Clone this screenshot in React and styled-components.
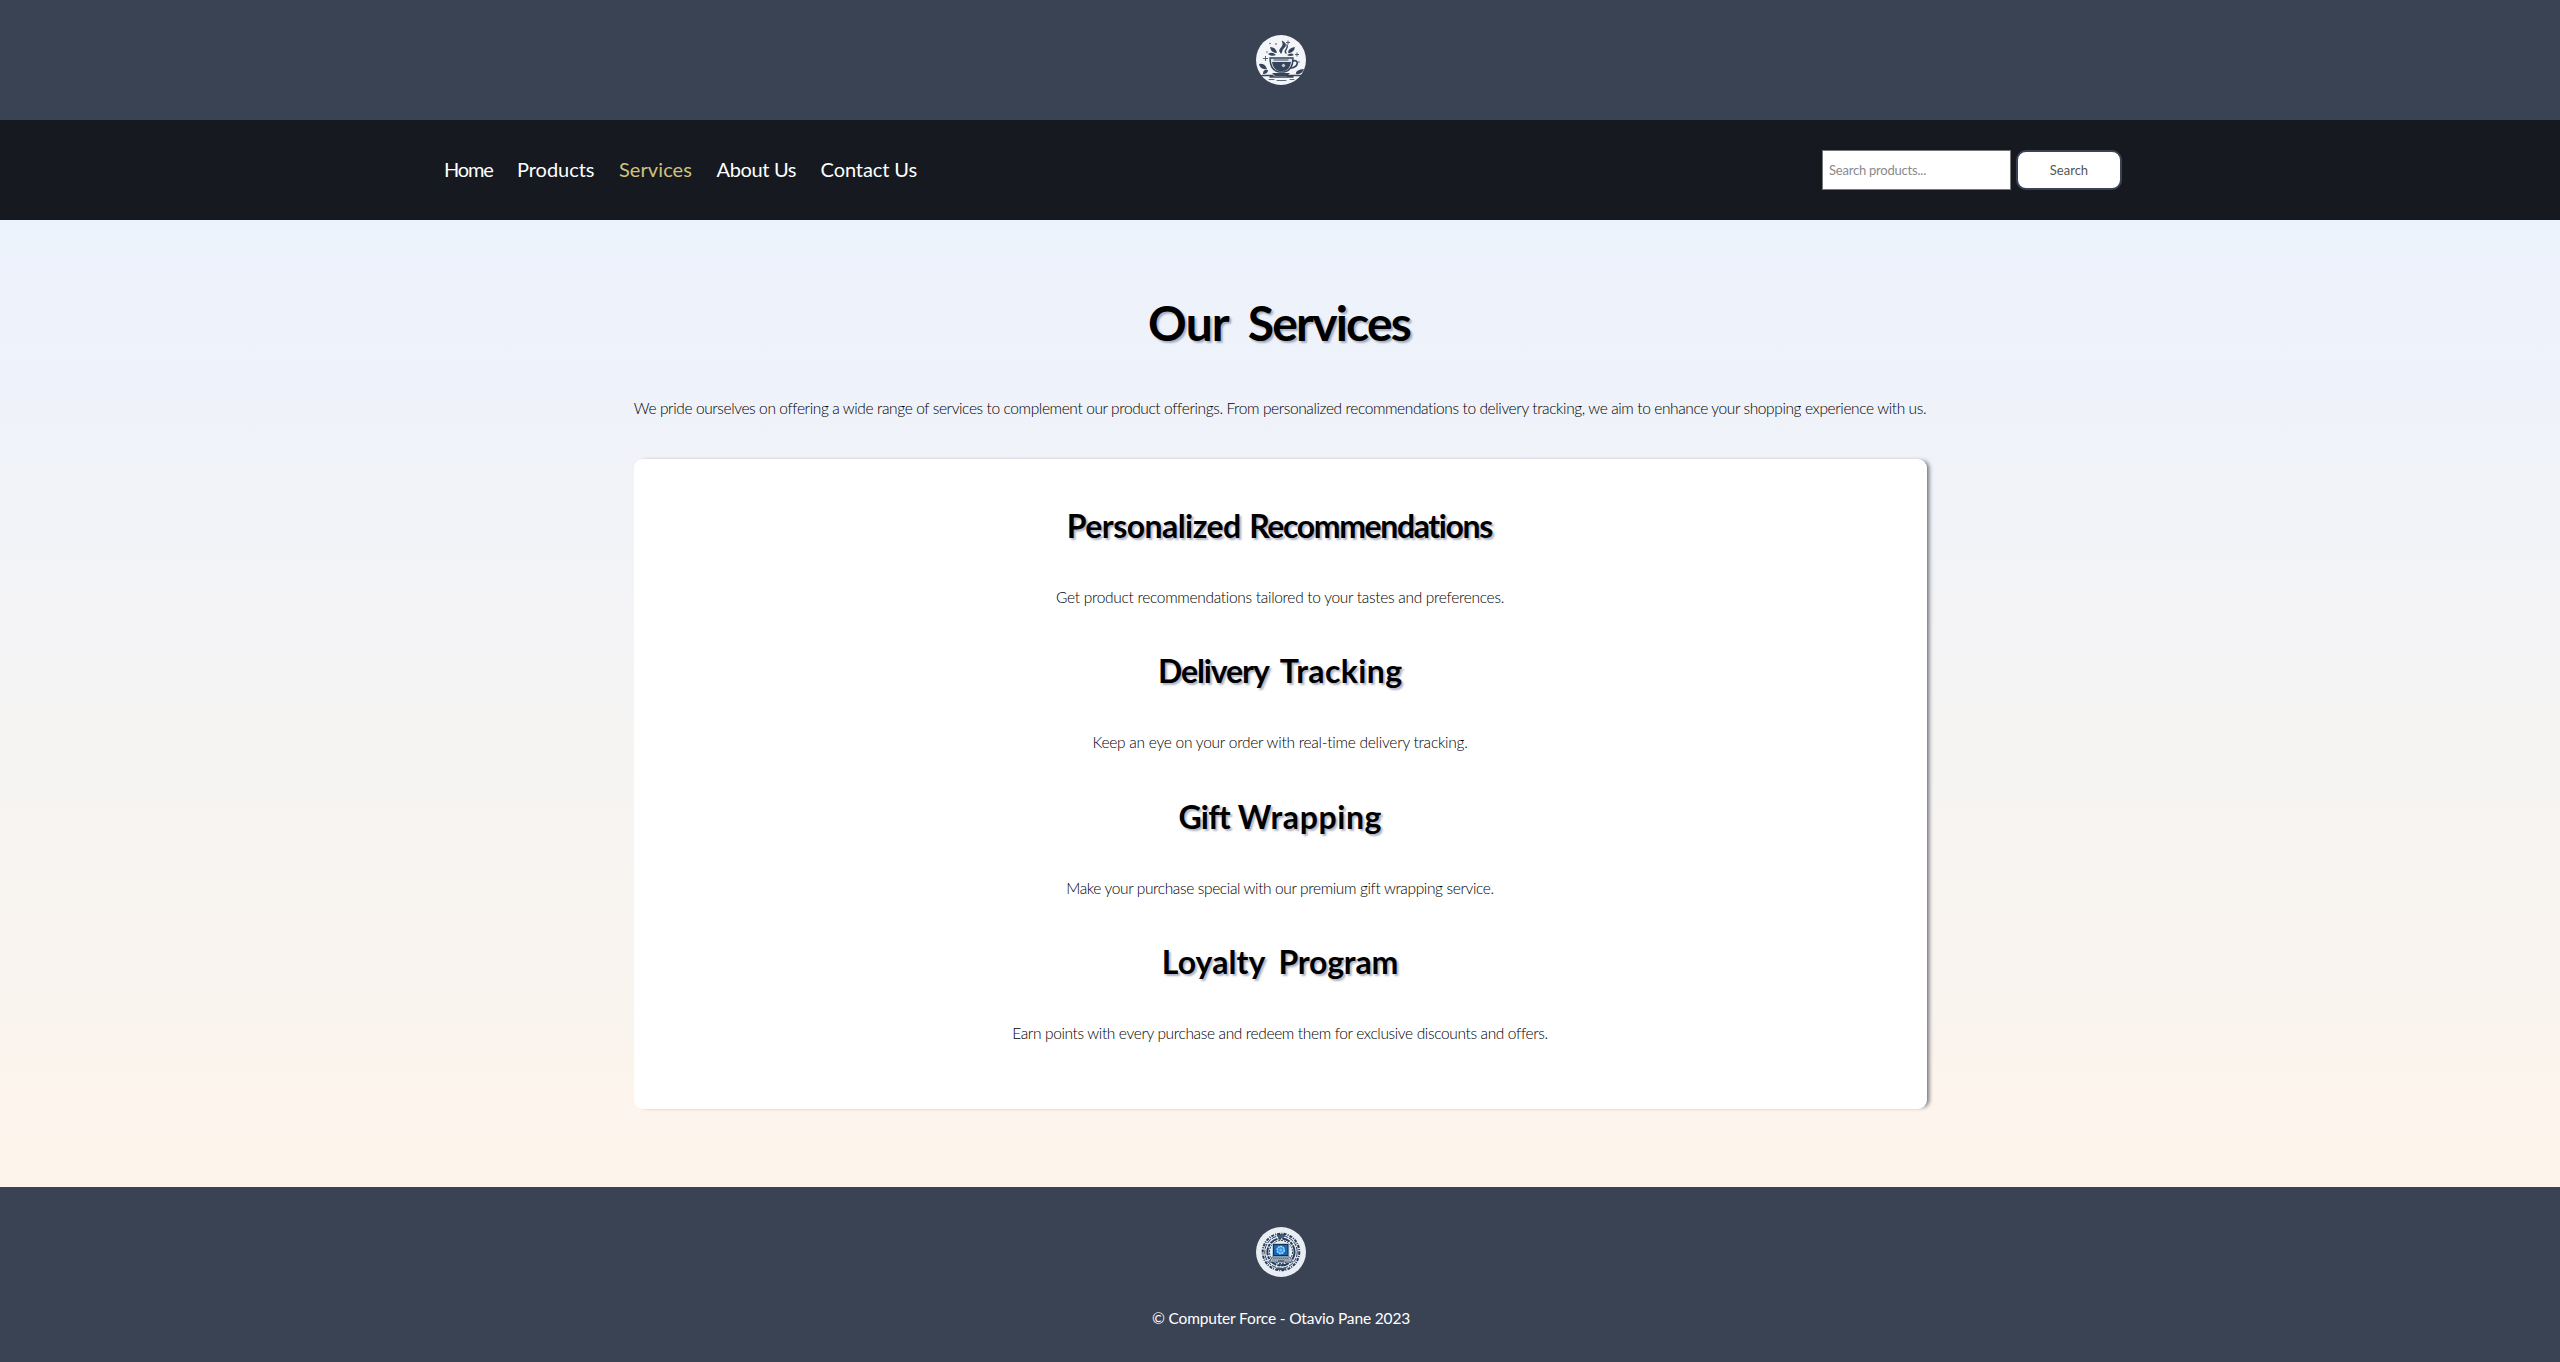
import React from "react";
import styled, { createGlobalStyle } from "styled-components";

const GlobalStyle = createGlobalStyle`
  *, *::before, *::after { box-sizing: border-box; }
  body {
    margin: 0;
    background: #394354;
    font-family: Lato, "Open Sans", sans-serif;
    color: #000000;
  }
`;

const Page = styled.div`
  display: flex;
  flex-direction: column;
  min-height: 1362px;
`;

const Header = styled.header`
  display: flex;
  justify-content: center;
  align-items: center;
  height: 120px;
  padding-left: 2px;
  background: #394354;
`;

const NavBar = styled.nav`
  display: flex;
  justify-content: space-between;
  align-items: center;
  height: 100px;
  padding: 0 438px 0 444px;
  background: #161a20;
`;

const Menu = styled.ul`
  display: flex;
  gap: 24.5px;
  margin: 0;
  padding: 0 0 2px;
  list-style: none;
`;

const MenuLink = styled.a`
  display: block;
  color: ${(p) => (p.$active ? "#d1c27c" : "#ffffff")};
  font-size: 20px;
  line-height: 24px;
  letter-spacing: ${(p) => p.$track}px;
  white-space: nowrap;
  text-decoration: none;
`;

const SearchForm = styled.form`
  display: flex;
  align-items: center;
  gap: 5px;
`;

const SearchInput = styled.input`
  width: 189px;
  height: 40px;
  padding: 0 6px 1px;
  border: 1px solid #767676;
  border-radius: 0;
  background: #ffffff;
  font: 400 13px Lato, sans-serif;
  letter-spacing: -0.22px;
  &::placeholder { color: #8a8a8a; opacity: 1; }
`;

const SearchButton = styled.button`
  width: 106px;
  height: 40px;
  padding: 0 0 1px;
  border: 2px solid #394354;
  border-radius: 10px;
  background: #ffffff;
  color: #555555;
  font: 400 13px Lato, sans-serif;
`;

const Main = styled.main`
  display: flex;
  flex-direction: column;
  align-items: center;
  height: 967px;
  padding-top: 70px;
  background: linear-gradient(180deg, #ecf3fc 0%, #eff2fa 18%, #f5f4f4 50%, #fbf4ee 85%, #fef4ec 100%);
`;

const Title = styled.h1`
  display: flex;
  gap: 18px;
  margin: 0;
  color: #000000;
  font-size: 48px;
  line-height: 66px;
  text-shadow: 2px 2px 2px rgba(57, 67, 104, 0.4);
`;

const Word = styled.span`
  letter-spacing: ${(p) => p.$track}px;
  margin-right: ${(p) => -p.$track}px;
`;

const Copy = styled.p`
  margin: 0;
  font-size: 15.5px;
  font-weight: 300;
  line-height: 24px;
  letter-spacing: ${(p) => p.$track}px;
  white-space: nowrap;
`;

const Intro = styled(Copy)`
  margin-top: 40px;
`;

const Card = styled.section`
  display: flex;
  flex-direction: column;
  gap: 30.3px;
  width: 1293px;
  height: 650px;
  margin-top: 39px;
  padding-top: 43px;
  border-radius: 9px;
  background: #ffffff;
  box-shadow: 4px 0 4px -2px rgba(30, 36, 52, 0.65);
`;

const Service = styled.article`
  display: flex;
  flex-direction: column;
  align-items: center;
  gap: 35px;
  height: 115px;
`;

const ServiceTitle = styled.h2`
  display: flex;
  gap: ${(p) => p.$gap}px;
  margin: 0;
  color: #000000;
  font-size: 32px;
  line-height: 48px;
  text-shadow: 2px 2px 2px rgba(57, 67, 104, 0.4);
`;

const Footer = styled.footer`
  display: flex;
  flex-direction: column;
  align-items: center;
  height: 175px;
  padding: 40px 0 0 2px;
  background: #394354;
  color: #ffffff;
`;

const Copyright = styled.p`
  margin: 29px 0 0;
  font-size: 15.5px;
  line-height: 24px;
  letter-spacing: -0.16px;
`;

const Logo = styled.svg`
  display: block;
  width: 50px;
  height: 50px;
`;

const links = [
  { label: "Home", track: -1.2 },
  { label: "Products", track: -0.05 },
  { label: "Services", track: 0.1, active: true },
  { label: "About Us", track: -0.35 },
  { label: "Contact Us", track: -0.1 },
];

const services = [
  {
    words: [["Personalized", -0.55], ["Recommendations", -1.4]],
    gap: 8,
    text: "Get product recommendations tailored to your tastes and preferences.",
    track: -0.3,
  },
  {
    words: [["Delivery", -1.1], ["Tracking", 0.4]],
    gap: 10,
    text: "Keep an eye on your order with real-time delivery tracking.",
    track: -0.25,
  },
  {
    words: [["Gift", -0.8], ["Wrapping", 0.6]],
    gap: 7,
    text: "Make your purchase special with our premium gift wrapping service.",
    track: -0.37,
  },
  {
    words: [["Loyalty", 0.1], ["Program", -0.2]],
    gap: 13,
    text: "Earn points with every purchase and redeem them for exclusive discounts and offers.",
    track: -0.36,
  },
];

function CoffeeLogo() {
  return (
    <Logo viewBox="0 0 50 50" aria-label="Coffee shop logo">
      <circle cx="25" cy="25" r="25" fill="#f3f5f9" />
      <g fill="none" stroke="#36445a" strokeWidth="1.4" strokeLinecap="round">
        <path d="M25 18c-5-4 5-6 1-12c6 3 3 6 1 8c-2 2 0 3-2 4Z" fill="#36445a" strokeWidth=".7" />
        <path d="M30 18c-3-3 3-4 1-8" />
        <path d="M14 23h23c0 8-3 13-9 14h-5c-6-1-9-6-9-14Z" fill="#dfe4ec" />
        <path d="M16 27h19c-1 5-3 9-8 9h-4c-4-1-6-4-7-9Z" fill="#36445a" stroke="none" />
        <path d="M37 26c6-2 6 6-2 7" strokeWidth="1.7" />
        <path d="M18 25h14" strokeWidth="1" />
        <path d="M6 40.5h11M31 40.5h15M14 42h23" strokeWidth="1.5" />
        <path d="M21 45.5h9M13 44.5h5M34 44.5h4" strokeWidth=".8" />
      </g>
      <g fill="#36445a">
        <path d="M14 12q6 0 7 6q-6 0-7-6ZM12 19q4-3 8 1q-4 2-8-1ZM32 18q0-5 7-6q-1 6-7 6ZM31 20q4-3 7 0q-4 2-7 0Z" />
        <path d="M3 29q6-1 8 5q-7 1-8-5ZM7 39q0-5 5-4q0 4-5 4ZM40 39q-1-4 8-5q-2 6-8 5ZM16 38h18l-3 3H19Z" />
        <circle cx="14" cy="8.500" r=".7" />
        <circle cx="36" cy="19" r=".6" />
        <circle cx="11" cy="17" r=".7" />
        <circle cx="43" cy="27" r=".7" />
        <circle cx="20" cy="9" r=".8" />
      </g>
      <path d="M25.500 30.500l2-2 2 2-2 2Z" fill="#c4ccda" />
      <path d="M9.500 21v5M7 23.500h5M32 5.500v4M30 7.500h4M41 17.500v4M39 19.500h4" stroke="#536077" strokeWidth="1" />
    </Logo>
  );
}

function ComputerLogo() {
  return (
    <Logo viewBox="0 0 50 50" aria-label="Computer Force logo">
      <circle cx="25" cy="25" r="25" fill="#e9edf4" />
      <g fill="none" stroke="#263c58">
        <circle cx="25" cy="25" r="18.300" strokeWidth="2" strokeDasharray="3 1.200 1 1.100" />
        <circle cx="25" cy="25" r="16.200" strokeWidth="1" strokeDasharray="5 1" />
        <circle cx="25" cy="25" r="13.600" strokeWidth="2" strokeDasharray="8 1 3 1" />
        <circle cx="25" cy="25" r="11.500" strokeWidth="1" strokeDasharray="2 1" />
        <path d="M21 8h8M22 10h6M20 42h10M22 38h6" strokeWidth="1.500" />
      </g>
      <rect x="16.500" y="16.500" width="16.500" height="13" rx="1" fill="#15314f" stroke="#b9c8d8" />
      <rect x="18" y="18" width="13.500" height="10" fill="#1769b7" />
      <circle cx="24.700" cy="23" r="3.500" fill="#2d8ddd" stroke="#a9dbfa" strokeWidth="1.600" strokeDasharray="2 .6" />
      <circle cx="24.700" cy="23" r="1.500" fill="#75bded" />
      <path d="M16 30h18l2.500 5h-23Z" fill="#b9c5d0" stroke="#2b405a" strokeWidth=".7" />
      <path d="M17 31.500h16M16 33h18" stroke="#45596f" strokeWidth=".8" strokeDasharray="1.500 .5" />
      <path d="M22 34h6" stroke="#263c58" />
    </Logo>
  );
}

export default function App() {
  return (
    <Page>
      <GlobalStyle />
      <Header>
        <CoffeeLogo />
      </Header>
      <NavBar>
        <Menu>
          {links.map((link) => (
            <li key={link.label}>
              <MenuLink href="#" $active={link.active} $track={link.track}>
                {link.label}
              </MenuLink>
            </li>
          ))}
        </Menu>
        <SearchForm>
          <SearchInput type="text" placeholder="Search products..." />
          <SearchButton type="button">Search</SearchButton>
        </SearchForm>
      </NavBar>
      <Main>
        <Title>
          <Word $track={-0.9}>Our</Word>
          <Word $track={-1.8}>Services</Word>
        </Title>
        <Intro $track={-0.39}>
          We pride ourselves on offering a wide range of services to complement our product offerings. From
          personalized recommendations to delivery tracking, we aim to enhance your shopping experience with us.
        </Intro>
        <Card>
          {services.map((service) => (
            <Service key={service.text}>
              <ServiceTitle $gap={service.gap}>
                {service.words.map(([word, track]) => (
                  <Word key={word} $track={track}>
                    {word}
                  </Word>
                ))}
              </ServiceTitle>
              <Copy $track={service.track}>{service.text}</Copy>
            </Service>
          ))}
        </Card>
      </Main>
      <Footer>
        <ComputerLogo />
        <Copyright>© Computer Force - Otavio Pane 2023</Copyright>
      </Footer>
    </Page>
  );
}
